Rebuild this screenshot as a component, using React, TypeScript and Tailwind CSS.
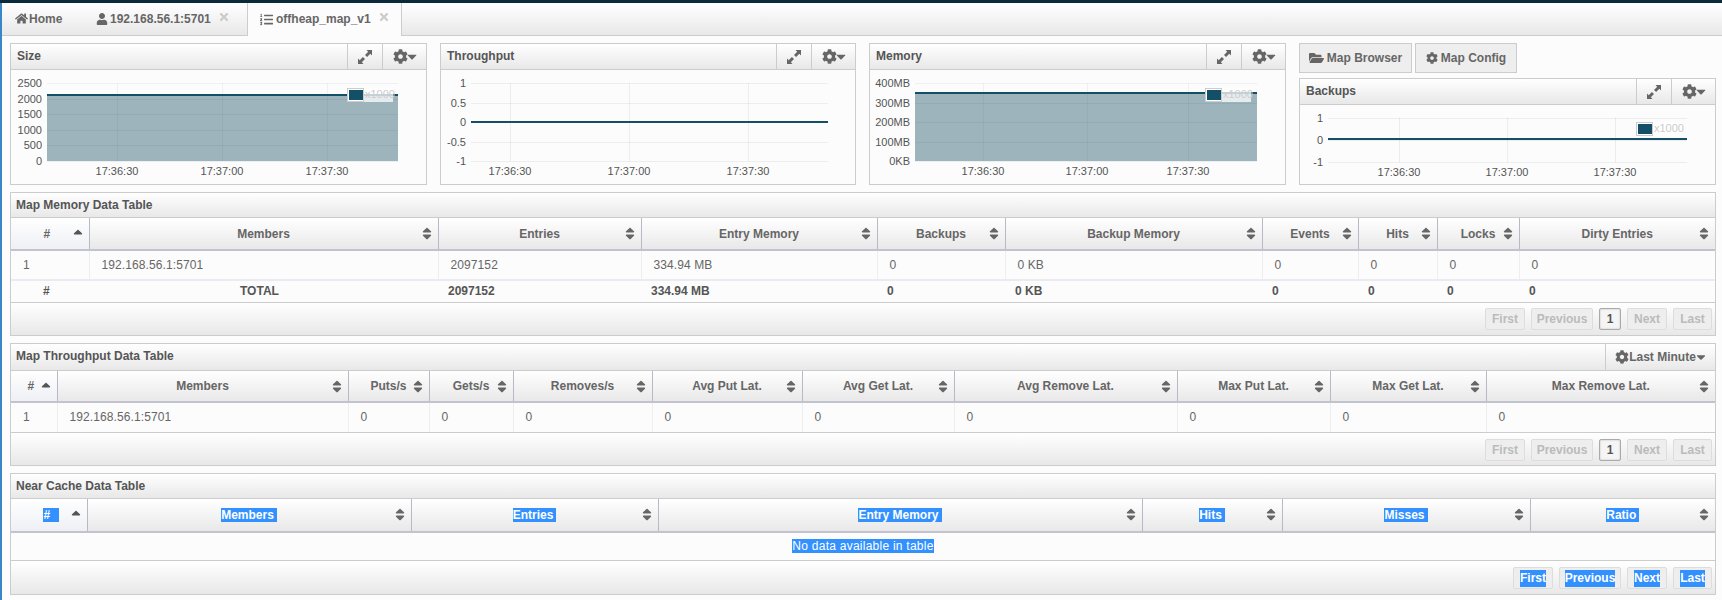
import React from 'react';
import {
  FaCaretDown,
  FaCog,
  FaFolderOpen,
  FaHome,
  FaListOl,
  FaSort,
  FaSortUp,
  FaTimes,
  FaUser,
} from 'react-icons/fa';

type ChartProps = {
  width: number;
  plotLeft: number;
  plotRight: number;
  top: number;
  bottom: number;
  yLabels: string[];
  lineY: number;
  filled?: boolean;
  xGrid: number[];
  legendX?: number;
  legendY?: number;
};

const xLabels = ['17:36:30', '17:37:00', '17:37:30'];

// flot style chart, all coordinates are relative to the panel body
const Chart: React.FC<ChartProps> = ({ width, plotLeft, plotRight, top, bottom, yLabels, lineY, filled, xGrid, legendX, legendY }) => {
  const step = (bottom - top) / (yLabels.length - 1);
  return (
    <svg width={width} height={114} className="block" fontFamily="Liberation Sans, Arial, sans-serif" fontSize="11">
      {filled && <rect x={plotLeft} y={lineY} width={plotRight - plotLeft} height={bottom - lineY} fill="#9db4bd" />}
      {yLabels.map((label, i) => {
        const y = Math.round(top + step * i);
        return (
          <g key={label}>
            <line x1={plotLeft} x2={plotRight} y1={y + 0.5} y2={y + 0.5} stroke={filled ? '#0f4c63' : '#000'} strokeOpacity={filled && y > lineY ? 0.07 : 0.06} />
            <text x={plotLeft - 5} y={y + 4} textAnchor="end" fill="#545454">{label}</text>
          </g>
        );
      })}
      {xGrid.map((x, i) => (
        <g key={x}>
          <line x1={x + 0.5} x2={x + 0.5} y1={top} y2={bottom} stroke={filled ? '#0f4c63' : '#000'} strokeOpacity={0.06} />
          <text x={x} y={bottom + 14} textAnchor="middle" fill="#545454">{xLabels[i]}</text>
        </g>
      ))}
      <line x1={plotLeft} x2={plotRight} y1={lineY} y2={lineY} stroke="#134f66" strokeWidth="2" />
      {legendX !== undefined && legendY !== undefined && (
        <g>
          <rect x={legendX + 16} y={legendY} width={30} height={14} fill="#fff" fillOpacity="0.75" />
          <rect x={legendX + 0.5} y={legendY + 0.5} width={16} height={13} fill="#fff" stroke="#ccc" />
          <rect x={legendX + 2} y={legendY + 2} width={14} height={10} fill="#134f66" />
          <text x={legendX + 18} y={legendY + 10} fill="#ccc">x1000</text>
        </g>
      )}
    </svg>
  );
};

const ResizeIcon = () => (
  <svg width="14" height="14" viewBox="0 0 14 14" fill="#666">
    <path d="M14 0H8.5L10.2 1.7L7 4.9L9.1 7L12.3 3.8L14 5.5Z" />
    <path d="M0 14H5.5L3.8 12.3L7 9.1L4.9 7L1.7 10.2L0 8.5Z" />
  </svg>
);

const ChartPanel: React.FC<{ title: string; className?: string; chart: ChartProps }> = ({ title, className, chart }) => (
  <div className={`border border-[#ccc] bg-[#fcfcfc] ${className ?? ''}`}>
    <div className="flex h-[26px] items-stretch border-b border-[#ccc] bg-gradient-to-b from-white to-[#e8e8e8] text-[#555]">
      <div className="flex-1 pl-[6px] text-[12px] font-bold leading-[25px]">{title}</div>
      <div className="flex w-[35px] items-center justify-center border-l border-[#ccc]">
        <ResizeIcon />
      </div>
      <div className="flex w-[44px] items-center justify-center border-l border-[#ccc] text-[#666]">
        <FaCog className="h-[15px] w-[15px]" />
        <FaCaretDown className="-ml-[1px] h-[15px] w-[10px]" />
      </div>
    </div>
    <Chart {...chart} />
  </div>
);

const PageButton: React.FC<{ label: string; selected?: boolean; active?: boolean; className?: string }> = ({ label, selected, active, className }) => (
  <div
    className={`flex h-[22px] items-center justify-center rounded-[2px] border text-[12px] font-bold ${
      active ? 'border-[#aaa] bg-[#f5f5f5] text-[#555] shadow-[inset_0_0_2px_#bbb]' : 'border-[#ddd] bg-[#eee] text-[#bbb]'
    } ${className ?? ''}`}
  >
    {selected ? <span className="bg-[#3390ff] leading-[17px] text-white">{label}</span> : label}
  </div>
);

const Pager: React.FC<{ selected?: boolean; showPage?: boolean; className?: string }> = ({ selected, showPage = true, className }) => (
  <div className={`flex items-center justify-end gap-[6px] bg-gradient-to-b from-white to-[#e8e8e8] pr-[3px] ${className ?? ''}`}>
    <PageButton label="First" selected={selected} className="w-[40px]" />
    <PageButton label="Previous" selected={selected} className="w-[62px]" />
    {showPage && <PageButton label="1" active className="w-[22px]" />}
    <PageButton label="Next" selected={selected} className="w-[40px]" />
    <PageButton label="Last" selected={selected} className="w-[39px]" />
  </div>
);

type Col = { label: string; width: string };

const HeaderCell: React.FC<{ col: Col; first: boolean; selected?: boolean }> = ({ col, first, selected }) => (
  <th className={`relative border-r border-b-2 border-r-[#b9b9c6] border-b-[#c3c3cf] p-0 text-center text-[12px] font-bold text-[#666] last:border-r-0 ${first ? 'bg-gradient-to-b from-white to-[#eef0f5]' : 'bg-gradient-to-b from-white to-[#e8e8e8]'} ${first && !selected ? 'pr-[6px]' : ''} ${first && selected ? 'pl-[5px]' : ''}`}>
    <span className={selected ? (first ? 'bg-[#3390ff] pr-[9px] text-white' : 'bg-[#3390ff] pr-[3px] text-white') : ''}>{col.label}</span>
    {first ? (
      <FaSortUp className="absolute top-[10px] right-[4px] h-[15px] w-[14px] text-[#555]" />
    ) : (
      <FaSort className="absolute top-[8px] right-[4px] h-[15px] w-[14px] text-[#666]" />
    )}
  </th>
);

const TableHead: React.FC<{ cols: Col[]; heightClass: string; selected?: boolean }> = ({ cols, heightClass, selected }) => (
  <>
    <colgroup>
      {cols.map((c) => (
        <col key={c.label} className={c.width} />
      ))}
    </colgroup>
    <thead>
      <tr className={heightClass}>
        {cols.map((c, i) => (
          <HeaderCell key={c.label} col={c} first={i === 0} selected={selected} />
        ))}
      </tr>
    </thead>
  </>
);

const PanelTitle: React.FC<{ title: string; children?: React.ReactNode; className?: string }> = ({ title, children, className }) => (
  <div className={`flex items-stretch border-b border-[#ccc] bg-gradient-to-b from-white to-[#e8e8e8] ${className ?? ''}`}>
    <div className="flex-1 pl-[5px] text-[12px] leading-[24px] font-bold text-[#555]">{title}</div>
    {children}
  </div>
);

const memoryCols: Col[] = [
  { label: '#', width: 'w-[78px]' },
  { label: 'Members', width: 'w-[349px]' },
  { label: 'Entries', width: 'w-[203px]' },
  { label: 'Entry Memory', width: 'w-[236px]' },
  { label: 'Backups', width: 'w-[128px]' },
  { label: 'Backup Memory', width: 'w-[257px]' },
  { label: 'Events', width: 'w-[96px]' },
  { label: 'Hits', width: 'w-[79px]' },
  { label: 'Locks', width: 'w-[82px]' },
  { label: 'Dirty Entries', width: 'w-[196px]' },
];

const throughputCols: Col[] = [
  { label: '#', width: 'w-[46px]' },
  { label: 'Members', width: 'w-[291px]' },
  { label: 'Puts/s', width: 'w-[81px]' },
  { label: 'Gets/s', width: 'w-[84px]' },
  { label: 'Removes/s', width: 'w-[139px]' },
  { label: 'Avg Put Lat.', width: 'w-[150px]' },
  { label: 'Avg Get Lat.', width: 'w-[152px]' },
  { label: 'Avg Remove Lat.', width: 'w-[223px]' },
  { label: 'Max Put Lat.', width: 'w-[153px]' },
  { label: 'Max Get Lat.', width: 'w-[156px]' },
  { label: 'Max Remove Lat.', width: 'w-[229px]' },
];

const nearCols: Col[] = [
  { label: '#', width: 'w-[76px]' },
  { label: 'Members', width: 'w-[324px]' },
  { label: 'Entries', width: 'w-[247px]' },
  { label: 'Entry Memory', width: 'w-[484px]' },
  { label: 'Hits', width: 'w-[140px]' },
  { label: 'Misses', width: 'w-[248px]' },
  { label: 'Ratio', width: 'w-[185px]' },
];

const memoryRow = ['1', '192.168.56.1:5701', '2097152', '334.94 MB', '0', '0 KB', '0', '0', '0', '0'];
const memoryTotal = ['#', 'TOTAL', '2097152', '334.94 MB', '0', '0 KB', '0', '0', '0', '0'];
const throughputRow = ['1', '192.168.56.1:5701', '0', '0', '0', '0', '0', '0', '0', '0', '0'];

const DataRow: React.FC<{ cells: string[] }> = ({ cells }) => (
  <tr className="h-[30px]">
    {cells.map((c, i) => (
      <td key={i} className="border-r border-[#eee] pl-[12px] text-[12px] tracking-[0.1px] text-[#666] last:border-r-0">
        {c}
      </td>
    ))}
  </tr>
);

export default function App() {
  return (
    <div className="h-[600px] overflow-hidden bg-[#fcfcfc] font-['Liberation_Sans',Arial,sans-serif]">
      <div className="h-[3px] bg-[#0b2b3a]" />
      <div className="h-[597px] border-l-[2px] border-[#3a87c8]">
        {/* Tabs */}
        <div className="flex h-[33px] items-stretch border-b border-[#ccc] bg-gradient-to-b from-white to-[#e8e8e8] text-[12px] font-bold text-[#666]">
          <div className="flex w-[82px] items-center gap-[1px] pb-[1px] pl-[13px]">
            <FaHome className="h-[13px] w-[13px]" />
            Home
          </div>
          <div className="flex w-[163px] items-center pb-[1px] pl-[12px]">
            <FaUser className="mr-[2px] h-[12px] w-[12px]" />
            192.168.56.1:5701
            <FaTimes className="mb-[4px] ml-[7px] h-[12px] w-[12px] text-[#ccc]" />
          </div>
          <div className="-mb-px flex w-[155px] items-center border-x border-[#ccc] bg-[#fcfcfc] pb-[1px] pl-[12px]">
            <FaListOl className="mr-[3px] h-[13px] w-[13px]" />
            offheap_map_v1
            <FaTimes className="mb-[4px] ml-[7px] h-[12px] w-[12px] text-[#ccc]" />
          </div>
        </div>

        <div className="flex flex-col pt-[7px] pr-[6px] pl-[8px]">
          {/* Charts */}
          <div className="flex h-[142px] gap-[13px]">
            <ChartPanel
              title="Size"
              className="w-[417px]"
              chart={{ width: 415, plotLeft: 36, plotRight: 387, top: 13, bottom: 91, yLabels: ['2500', '2000', '1500', '1000', '500', '0'], lineY: 25, filled: true, xGrid: [106, 211, 316], legendX: 336, legendY: 18 }}
            />
            <ChartPanel
              title="Throughput"
              className="w-[416px]"
              chart={{ width: 414, plotLeft: 30, plotRight: 387, top: 13, bottom: 91, yLabels: ['1', '0.5', '0', '-0.5', '-1'], lineY: 52, xGrid: [69, 188, 307] }}
            />
            <ChartPanel
              title="Memory"
              className="w-[417px]"
              chart={{ width: 415, plotLeft: 45, plotRight: 387, top: 13, bottom: 91, yLabels: ['400MB', '300MB', '200MB', '100MB', '0KB'], lineY: 23, filled: true, xGrid: [113, 217, 318], legendX: 335, legendY: 18 }}
            />
            <div className="flex w-[417px] flex-col">
              <div className="flex h-[30px] gap-[3px] text-[12px] font-bold text-[#666]">
                <div className="flex w-[113px] items-center justify-center gap-[3px] border border-[#ccc] bg-[#eee]">
                  <FaFolderOpen className="h-[14px] w-[15px]" />
                  Map Browser
                </div>
                <div className="flex w-[102px] items-center justify-center gap-[3px] border border-[#ccc] bg-[#eee]">
                  <FaCog className="h-[12px] w-[12px]" />
                  Map Config
                </div>
              </div>
              <ChartPanel
                title="Backups"
                className="mt-[5px] flex-1 overflow-hidden"
                chart={{ width: 415, plotLeft: 28, plotRight: 387, top: 13, bottom: 57, yLabels: ['1', '0', '-1'], lineY: 34, xGrid: [99, 207, 315], legendX: 336, legendY: 17 }}
              />
            </div>
          </div>

          {/* Map memory */}
          <div className="mt-[7px] border border-[#ccc]">
            <PanelTitle title="Map Memory Data Table" className="h-[25px]" />
            <table className="w-full table-fixed border-collapse">
              <TableHead cols={memoryCols} heightClass="h-[32px]" />
              <tbody>
                <DataRow cells={memoryRow} />
                <tr className="h-[22px] border-t-2 border-b border-t-[#eaeaf0] border-b-[#ccc] text-[12px] font-bold text-[#555]">
                  {memoryTotal.map((c, i) => (
                    <td key={i} className={i === 0 ? 'pl-[32px]' : i === 1 ? 'pl-[151px]' : 'pl-[10px]'}>
                      {c}
                    </td>
                  ))}
                </tr>
              </tbody>
            </table>
            <Pager className="h-[32px]" />
          </div>

          {/* Map throughput */}
          <div className="mt-[7px] border border-[#ccc]">
            <PanelTitle title="Map Throughput Data Table" className="h-[27px]">
              <div className="flex w-[110px] items-center justify-center border-l border-[#ccc] text-[12px] font-bold text-[#666]">
                <FaCog className="h-[14px] w-[14px]" />
                Last Minute
                <FaCaretDown className="h-[14px] w-[10px]" />
              </div>
            </PanelTitle>
            <table className="w-full table-fixed border-collapse">
              <TableHead cols={throughputCols} heightClass="h-[31px]" />
              <tbody>
                <DataRow cells={throughputRow} />
              </tbody>
            </table>
            <Pager className="h-[33px] border-t border-[#ccc] pt-[2px]" />
          </div>

          {/* Near cache */}
          <div className="mt-[7px] border border-[#ccc]">
            <PanelTitle title="Near Cache Data Table" className="h-[25px]" />
            <table className="w-full table-fixed border-collapse">
              <TableHead cols={nearCols} heightClass="h-[33px]" selected />
              <tbody>
                <tr className="h-[29px] border-b border-[#ccc]">
                  <td colSpan={7} className="text-center text-[12px] tracking-[0.25px] text-[#666]">
                    <span className="bg-[#3390ff] text-white">No data available in table</span>
                  </td>
                </tr>
              </tbody>
            </table>
            <Pager selected showPage={false} className="h-[33px] pt-[1px]" />
          </div>
        </div>
      </div>
    </div>
  );
}
